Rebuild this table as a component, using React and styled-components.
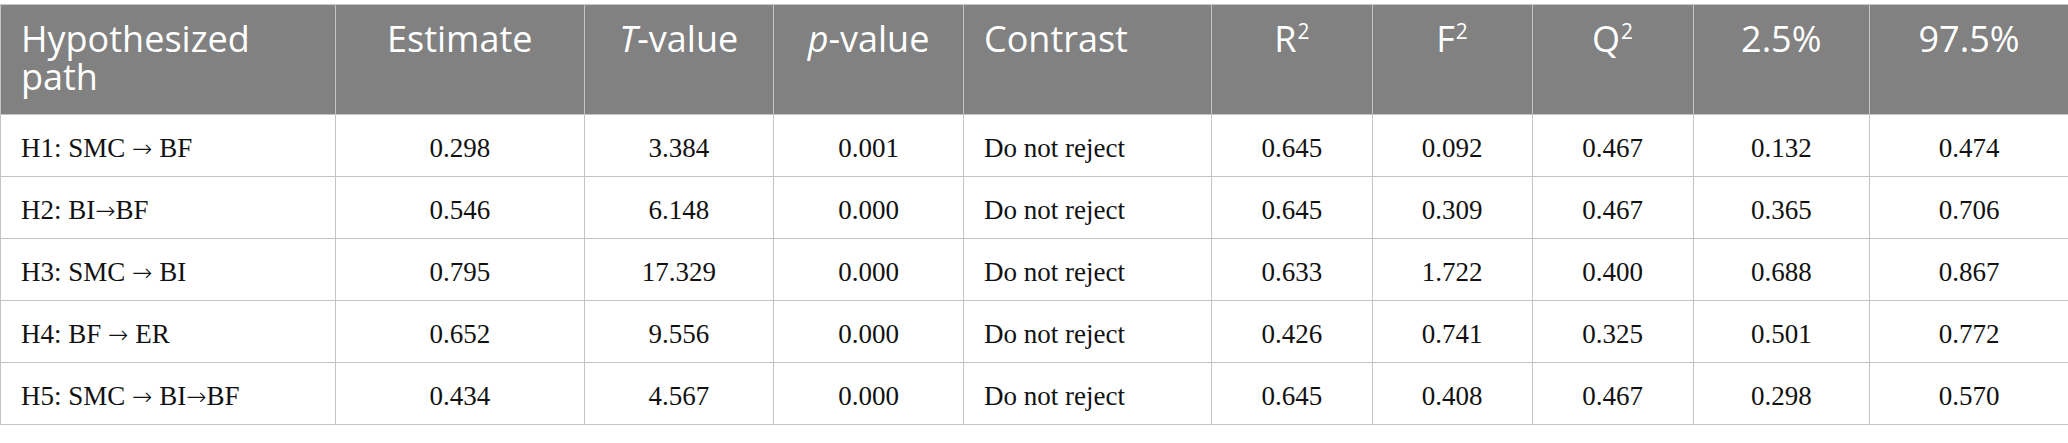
import React from "react";
import styled, { createGlobalStyle } from "styled-components";

const GlobalStyle = createGlobalStyle`
  html, body {
    margin: 0;
    padding: 0;
    background: #ffffff;
  }
`;

const Page = styled.div`
  padding-top: 4px;
  width: 2068px;
`;

const Table = styled.table`
  width: 2068px;
  table-layout: fixed;
  border-collapse: collapse;
`;

const HeadRow = styled.tr`
  height: 110px;
  background: #808180;
`;

const HeadCell = styled.th`
  border: 1px solid #c4c4c4;
  border-top-color: #c8c8c8;
  vertical-align: top;
  padding: 15px 20px 0 20px;
  font-family: "Open Sans", "Noto Sans", sans-serif;
  font-weight: 400;
  font-size: 36px;
  line-height: 38px;
  color: #ffffff;
  text-align: ${(p) => (p.$align === "left" ? "left" : "center")};
`;

const Sup = styled.sup`
  font-size: 0.58em;
  line-height: 0;
  vertical-align: 0;
  position: relative;
  top: -0.62em;
  margin-left: 1px;
`;

const Ital = styled.span`
  font-style: italic;
`;

const Arrow = styled.span`
  font-family: "DejaVu Sans ExtraLight", "DejaVu Sans", sans-serif;
  font-weight: 200;
  font-size: 0.9em;
  position: relative;
  top: 0.03em;
`;

const BodyRow = styled.tr`
  height: 62px;
`;

const Cell = styled.td`
  border: 1px solid #c4c4c4;
  vertical-align: middle;
  padding: 5px 20px 0 20px;
  font-family: "Liberation Serif", "Times New Roman", serif;
  font-size: 27px;
  color: #111111;
  white-space: nowrap;
  text-align: ${(p) => (p.$align === "left" ? "left" : "center")};
`;

const widths = [335, 248.5, 189.5, 190, 248, 160.5, 160, 161, 176.5, 199];

const headers = [
  { label: "Hypothesized path", align: "left" },
  { label: "Estimate" },
  { label: <><Ital>T</Ital>-value</> },
  { label: <><Ital>p</Ital>-value</> },
  { label: "Contrast", align: "left" },
  { label: <>R<Sup>2</Sup></> },
  { label: <>F<Sup>2</Sup></> },
  { label: <>Q<Sup>2</Sup></> },
  { label: "2.5%" },
  { label: "97.5%" },
];

const A = () => <Arrow>→</Arrow>;

const paths = [
  <>H1: SMC <A /> BF</>,
  <>H2: BI<A />BF</>,
  <>H3: SMC <A /> BI</>,
  <>H4: BF <A /> ER</>,
  <>H5: SMC <A /> BI<A />BF</>,
];

const rows = [
  ["0.298", "3.384", "0.001", "Do not reject", "0.645", "0.092", "0.467", "0.132", "0.474"],
  ["0.546", "6.148", "0.000", "Do not reject", "0.645", "0.309", "0.467", "0.365", "0.706"],
  ["0.795", "17.329", "0.000", "Do not reject", "0.633", "1.722", "0.400", "0.688", "0.867"],
  ["0.652", "9.556", "0.000", "Do not reject", "0.426", "0.741", "0.325", "0.501", "0.772"],
  ["0.434", "4.567", "0.000", "Do not reject", "0.645", "0.408", "0.467", "0.298", "0.570"],
];

export default function App() {
  return (
    <>
      <GlobalStyle />
      <Page>
        <Table>
          <colgroup>
            {widths.map((w, i) => (
              <col key={i} style={{ width: `${w}px` }} />
            ))}
          </colgroup>
          <thead>
            <HeadRow>
              {headers.map((h, i) => (
                <HeadCell key={i} $align={h.align}>
                  {h.label}
                </HeadCell>
              ))}
            </HeadRow>
          </thead>
          <tbody>
            {rows.map((r, ri) => (
              <BodyRow key={ri}>
                <Cell $align="left">{paths[ri]}</Cell>
                {r.map((c, ci) => (
                  <Cell key={ci} $align={ci === 3 ? "left" : "center"}>
                    {c}
                  </Cell>
                ))}
              </BodyRow>
            ))}
          </tbody>
        </Table>
      </Page>
    </>
  );
}
